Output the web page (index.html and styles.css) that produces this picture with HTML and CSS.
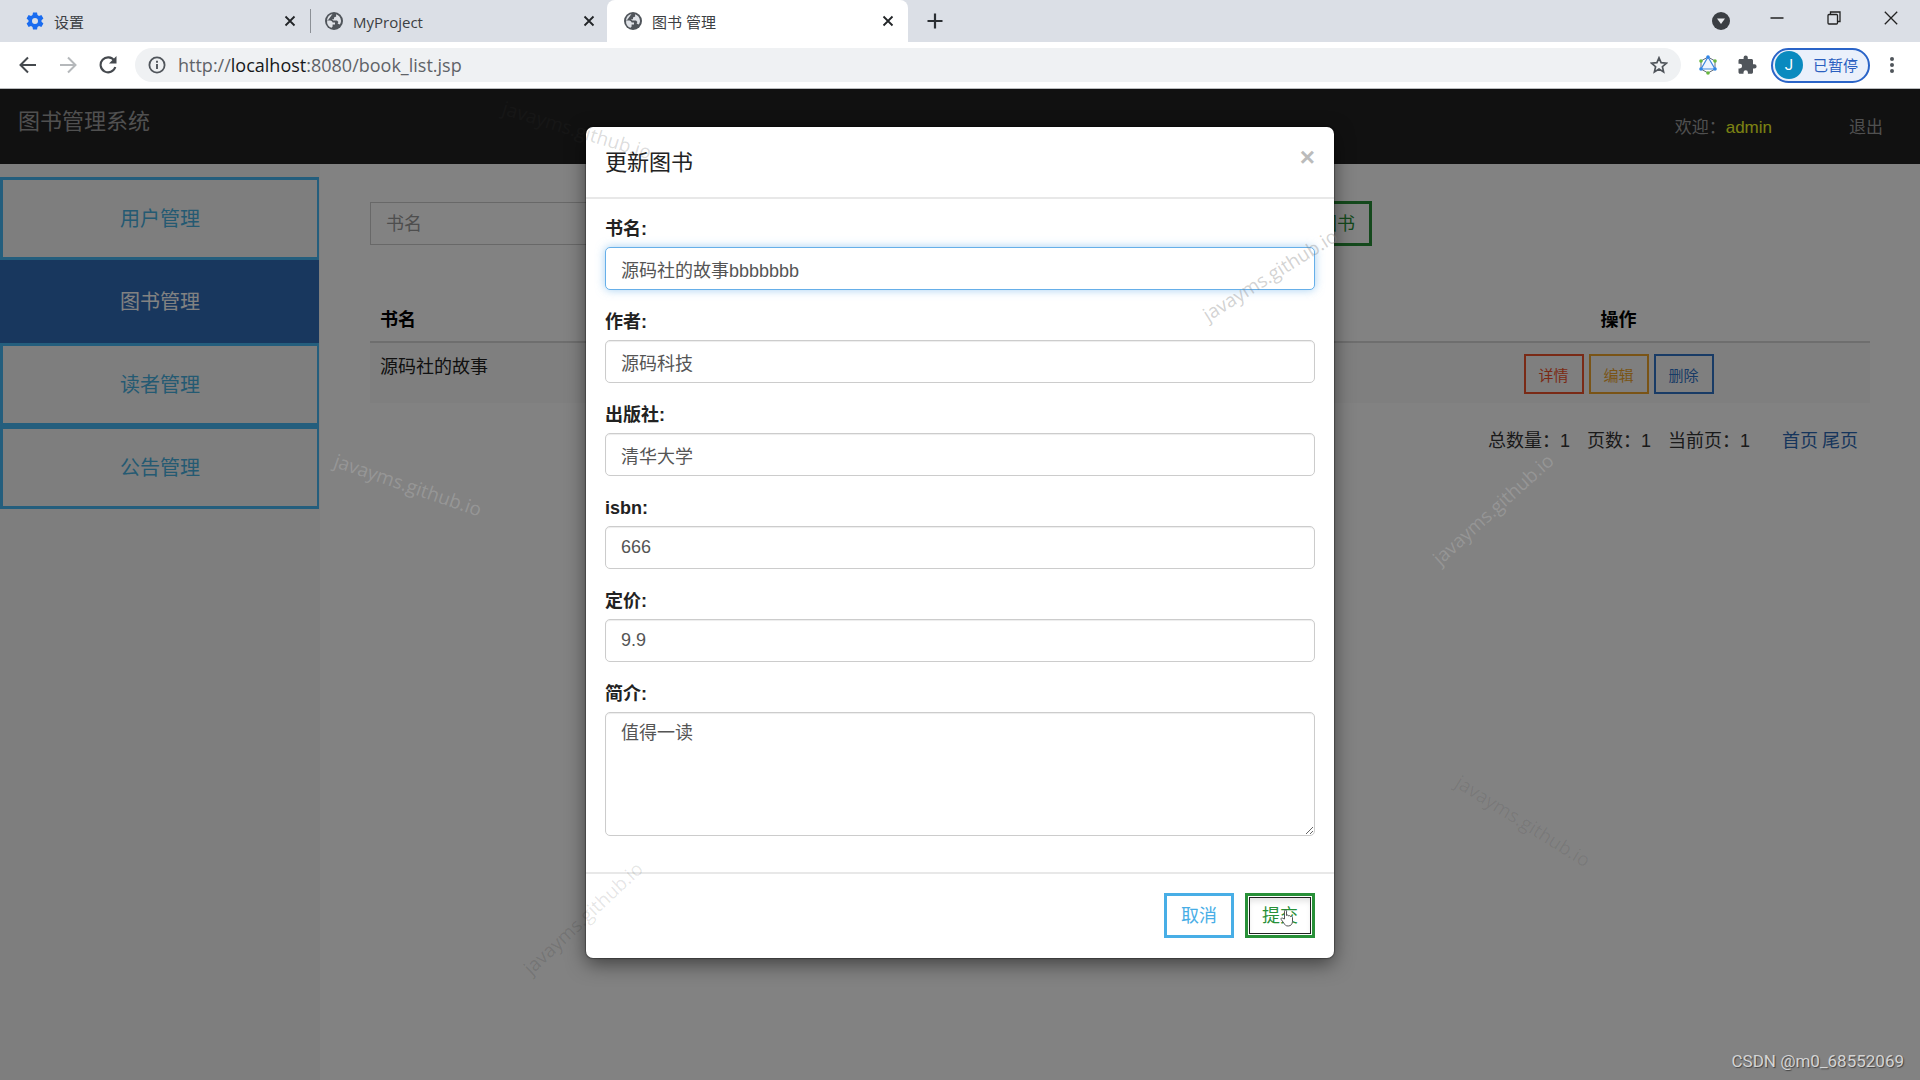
FILE: index.html
```
<!DOCTYPE html>
<html lang="zh-CN">
<head>
<meta charset="utf-8">
<title>图书 管理</title>
<link rel="stylesheet" href="styles.css">
</head>
<body>
<svg class="defs" aria-hidden="true">
  <symbol id="globe" viewBox="0 0 18 18">
    <circle cx="9" cy="9" r="9" fill="#50555b"/>
    <path d="M7.500 2C4.500 2.600 2.300 5 2 8.200L5.200 8.400C6.600 8.600 7.400 9.400 7.600 10.400H10V12.600H7.600V14.600L6.600 15.800C3.800 15 2 12.600 2 9.500" fill="#dfe2e7"/>
    <path d="M11 2.300L11.200 4.400L9 5.400V7.200H7L8.200 8.600H12L13.400 10L12.600 11.600L14.600 12.400C15.600 11.400 16 10 16 8.700C15.800 5.600 13.800 3.100 11 2.300Z" fill="#dfe2e7"/>
  </symbol>
  <symbol id="cross" viewBox="0 0 12 12">
    <path d="M1.500 1.500L10.500 10.500M10.500 1.500L1.500 10.500" stroke="#222528" stroke-width="1.800" fill="none"/>
  </symbol>
</svg>

<header class="browser">
  <div class="tabs">
    <div class="tab tab-first">
      <svg class="favicon" viewBox="0 0 18 18"><path fill="#1a6cf0" fill-rule="evenodd" d="M7 .5h4l.5 2.500 1.500.9 2.400-.8 2 3.400-1.900 1.700v1.600l1.900 1.700-2 3.400-2.400-.8-1.500.9-.5 2.500H7l-.5-2.500-1.500-.9-2.400.8-2-3.400 1.900-1.700V8.200L.6 6.500l2-3.400 2.400.8 1.500-.9zM9 6a3 3 0 1 0 0 6 3 3 0 0 0 0-6z"/></svg>
      <span class="tab-title">设置</span>
      <button class="icon-btn" aria-label="关闭标签页"><svg class="cross"><use href="#cross"/></svg></button>
    </div>
    <div class="tab tab-second">
      <svg class="favicon"><use href="#globe"/></svg>
      <span class="tab-title">MyProject</span>
      <button class="icon-btn" aria-label="关闭标签页"><svg class="cross"><use href="#cross"/></svg></button>
    </div>
    <div class="tab tab-active">
      <svg class="favicon"><use href="#globe"/></svg>
      <span class="tab-title">图书 管理</span>
      <button class="icon-btn" aria-label="关闭标签页"><svg class="cross"><use href="#cross"/></svg></button>
    </div>
    <button class="icon-btn new-tab" aria-label="新标签页"><svg width="16" height="16" viewBox="0 0 16 16"><path d="M8 .5v15M.5 8h15" stroke="#2b2f33" stroke-width="2.200"/></svg></button>
    <div class="window-controls">
      <button class="icon-btn tab-search" aria-label="搜索标签页"><svg width="18" height="18" viewBox="0 0 18 18"><circle cx="9" cy="9" r="9" fill="#3a3e43"/><path d="M5 6.500h8L9 12z" fill="#e8eaed"/></svg></button>
      <button class="icon-btn control" aria-label="最小化"><svg width="14" height="14" viewBox="0 0 14 14"><path d="M.5 7h13" stroke="#222" stroke-width="1.500"/></svg></button>
      <button class="icon-btn control" aria-label="还原"><svg width="14" height="14" viewBox="0 0 14 14" fill="none" stroke="#222" stroke-width="1.300"><rect x="1" y="3.500" width="9.500" height="9.500" rx="1"/><path d="M3.500 3.500V1h9.500v9.500h-2.500"/></svg></button>
      <button class="icon-btn control" aria-label="关闭"><svg width="14" height="14" viewBox="0 0 14 14"><path d="M.8.800L13.200 13.200M13.200.800L.8 13.200" stroke="#222" stroke-width="1.300"/></svg></button>
    </div>
  </div>
  <div class="toolbar">
    <button class="icon-btn" aria-label="后退"><svg width="18" height="18" viewBox="0 0 18 18"><path d="M17 9H2M9 1.500L1.500 9 9 16.500" fill="none" stroke="#45494e" stroke-width="2"/></svg></button>
    <button class="icon-btn" aria-label="前进"><svg width="18" height="18" viewBox="0 0 18 18"><path d="M1 9h15M9 1.500L16.500 9 9 16.500" fill="none" stroke="#b5b8bb" stroke-width="2"/></svg></button>
    <button class="icon-btn" aria-label="重新加载"><svg width="18" height="18" viewBox="0 0 18 18"><path d="M15.300 4.600A7.500 7.500 0 1 0 16.300 11" fill="none" stroke="#45494e" stroke-width="2.100"/><path d="M17.500 0v7.500H10z" fill="#45494e"/></svg></button>
    <div class="address">
      <svg width="18" height="18" viewBox="0 0 18 18"><circle cx="9" cy="9" r="7.600" fill="none" stroke="#50555b" stroke-width="1.800"/><path d="M9 8v5M9 4.700v2" stroke="#50555b" stroke-width="1.900"/></svg>
      <span class="url">http://<b>localhost</b>:8080/book_list.jsp</span>
      <svg width="18" height="18" viewBox="0 0 18 18"><path d="M9 1.800l2.100 4.900 5.300.5-4 3.500 1.200 5.200L9 13.100l-4.600 2.800 1.200-5.200-4-3.500 5.300-.5z" fill="none" stroke="#50555b" stroke-width="1.700"/></svg>
    </div>
    <div class="actions">
      <svg width="18" height="20" viewBox="0 0 18 20"><path d="M9 2l7 4v8l-7 4-7-4V6z" fill="none" stroke="#5d6a78"/><path d="M9 2l7 12H2z" fill="#eef4ff" stroke="#3d86e0" stroke-width="1.200"/><circle cx="9" cy="2" r="1.800" fill="#2f86e8"/><circle cx="16" cy="14" r="1.800" fill="#2f86e8"/><circle cx="2" cy="14" r="1.800" fill="#2f86e8"/><circle cx="2" cy="6" r="1.800" fill="#68b83e"/><circle cx="16" cy="6" r="1.800" fill="#68b83e"/><circle cx="9" cy="18" r="1.800" fill="#68b83e"/></svg>
      <svg width="20" height="20" viewBox="0 0 20 20"><path fill="#50555b" d="M17.500 9.300H16V5.500c0-.8-.7-1.500-1.500-1.500h-3.700V2.600a2.100 2.100 0 0 0-4.200 0V4H3C2.200 4 1.500 4.700 1.500 5.500v3.300h1.300a2.300 2.300 0 0 1 0 4.600H1.500v3.800c0 .8.700 1.500 1.500 1.500h3.500v-1.300a2.200 2.200 0 0 1 4.400 0v1.300h3.600c.8 0 1.500-.7 1.500-1.500v-3.700h1.500a2.100 2.100 0 0 0 0-4.200z"/></svg>
      <button class="profile"><span class="avatar">J</span>已暂停</button>
      <button class="icon-btn" aria-label="菜单"><svg width="4" height="18" viewBox="0 0 4 18" fill="#50555b"><circle cx="2" cy="3" r="2"/><circle cx="2" cy="9" r="2"/><circle cx="2" cy="15" r="2"/></svg></button>
    </div>
  </div>
</header>

<div class="page">
  <nav class="navbar">
    <a class="brand" href="#">图书管理系统</a>
    <span class="welcome">欢迎：<a class="user" href="#">admin</a></span>
    <a class="logout" href="#">退出</a>
  </nav>
  <div class="layout">
    <aside class="sidebar">
      <button class="side-btn">用户管理</button>
      <button class="side-btn side-active">图书管理</button>
      <button class="side-btn">读者管理</button>
      <button class="side-btn">公告管理</button>
    </aside>
    <main class="content">
      <form class="search">
        <input class="search-input" type="text" placeholder="书名" aria-label="书名">
        <button class="btn success" type="button">添加图书</button>
      </form>
      <table class="books">
        <thead><tr><th>书名</th><th></th><th class="ops">操作</th></tr></thead>
        <tbody><tr>
          <td>源码社的故事</td><td></td>
          <td class="ops">
            <div class="row-actions">
              <button class="btn small danger">详情</button>
              <button class="btn small warning">编辑</button>
              <button class="btn small primary">删除</button>
            </div>
          </td>
        </tr></tbody>
      </table>
      <div class="pager">
        <span>总数量：1</span><span>页数：1</span><span>当前页：1</span>
        <div class="pager-links"><a href="#">首页</a><a href="#">尾页</a></div>
      </div>
    </main>
  </div>

  <div class="backdrop">
    <div class="modal" role="dialog" aria-labelledby="modal-title">
      <div class="modal-header">
        <h4 class="modal-title" id="modal-title">更新图书</h4>
        <button class="modal-close" aria-label="关闭">×</button>
      </div>
      <form class="modal-body">
        <div class="field"><label for="name">书名:</label><input class="control-box focused" id="name" type="text" value="源码社的故事bbbbbbb"></div>
        <div class="field"><label for="author">作者:</label><input class="control-box" id="author" type="text" value="源码科技"></div>
        <div class="field"><label for="press">出版社:</label><input class="control-box" id="press" type="text" value="清华大学"></div>
        <div class="field"><label for="isbn">isbn:</label><input class="control-box" id="isbn" type="text" value="666"></div>
        <div class="field"><label for="price">定价:</label><input class="control-box" id="price" type="text" value="9.9"></div>
        <div class="field"><label for="intro">简介:</label><textarea class="control-box intro" id="intro">值得一读</textarea></div>
      </form>
      <div class="modal-footer">
        <button class="btn info">取消</button>
        <button class="btn success pressed">提交
          <svg class="pointer" width="16" height="18" viewBox="0 0 16 18"><path d="M4.500 10V2.200c0-1.600 2-1.600 2 0v4.300c.4-.8 2-.6 2 .5.500-.7 2-.5 2 .6.600-.6 2-.3 2 .9v3.700c0 2.800-1.600 4.800-4.300 4.800-2.500 0-3.200-1-4.300-2.800L1.200 10.500c-.7-1.300.8-2.100 1.700-1.100z" fill="#fff" stroke="#555" stroke-width="1"/></svg>
        </button>
      </div>
    </div>
  </div>

  <div class="marks" aria-hidden="true">
    <span class="mark mark-a">javayms.github.io</span>
    <span class="mark mark-b">javayms.github.io</span>
    <span class="mark mark-c">javayms.github.io</span>
    <span class="mark mark-d">javayms.github.io</span>
    <span class="mark mark-e">javayms.github.io</span>
    <span class="mark mark-f">javayms.github.io</span>
    <span class="credit">CSDN @m0_68552069</span>
  </div>
</div>
</body>
</html>
```
FILE: styles.css
```
* { box-sizing: border-box; }

body {
  margin: 0;
  min-height: 100vh;
  display: flex;
  flex-direction: column;
  font: 18px/25px "Liberation Sans", "Noto Sans CJK SC", sans-serif;
  color: #333;
  background: #fff;
}

button, input, textarea { font: inherit; color: inherit; margin: 0; }
a { text-decoration: none; }
svg { display: block; flex: none; }
.defs { display: none; }
.icon-btn { border: 0; padding: 0; background: none; }

/* browser chrome */
.browser { font-family: "Open Sans", "Noto Sans CJK SC", sans-serif; }
.tabs { display: flex; align-items: center; height: 42px; background: #dbdfe6; font-size: 15px; color: #3c4043; }
.tab { display: flex; align-items: center; gap: 10px; height: 42px; }
.tab-first {
  width: 311px;
  padding: 0 15px 0 26px;
  background: linear-gradient(#8c9096, #8c9096) right center / 1px 24px no-repeat;
}
.tab-second { width: 296px; padding: 0 12px 0 14px; }
.tab-active { width: 301px; padding: 0 14px 0 17px; background: #fff; border-radius: 8px 8px 0 0; }
.tab-title { flex: 1; padding-top: 2px; }
.favicon { width: 18px; height: 18px; }
.cross { width: 12px; height: 12px; }
.new-tab { margin-left: 19px; }
.window-controls { display: flex; align-items: center; margin-left: auto; gap: 43px; padding-right: 22px; }
.tab-search { margin-right: -3px; }
.control { padding-bottom: 6px; }
.toolbar {
  display: flex;
  align-items: center;
  gap: 22px;
  height: 47px;
  padding: 0 26px 0 19px;
  border-bottom: 1px solid #b9bbbd;
}
.address {
  flex: 1;
  display: flex;
  align-items: center;
  gap: 12px;
  height: 34px;
  padding: 0 13px;
  margin-left: -4px;
  border-radius: 17px;
  background: #eff1f3;
  font-size: 18px;
  color: #5f6368;
}
.url { flex: 1; }
.url b { font-weight: 400; color: #16181a; }
.actions { display: flex; align-items: center; gap: 20px; margin-left: -4px; }
.profile {
  display: flex;
  align-items: center;
  gap: 10px;
  height: 35px;
  padding: 0 10px 0 2px;
  margin-left: -6px;
  border: 2px solid #2a64c8;
  border-radius: 18px;
  background: #eaf0fb;
  font-size: 15px;
  color: #2a5fc0;
}
.avatar { width: 28px; height: 28px; border-radius: 14px; background: #0a8abf; color: #fff; font-family: Roboto, sans-serif; line-height: 28px; }

/* application */
.page { flex: 1; position: relative; display: flex; flex-direction: column; overflow: hidden; }
.navbar { display: flex; align-items: center; height: 75px; padding: 2px 37px 0 18px; background: #222; color: #9d9d9d; font-size: 17px; }
.navbar a { color: #9d9d9d; }
.navbar .brand { font-size: 22px; margin: 0 auto 12px 0; }
.navbar .user { color: #f2ff26; }
.logout { margin-left: 77px; }

.layout { flex: 1; display: flex; }
.sidebar { width: 320px; padding: 13px 1px 0 0; background: #f8f8f8; display: flex; flex-direction: column; }
.side-btn { height: 83px; padding: 2px 0 0; border: 3px solid #48b8f5; border-right-width: 2px; background: none; font-size: 20px; color: #48b0e0; }
.side-active { background: #2f6cb8; border-color: #2f6cb8; color: #fff; }

.content { flex: 1; padding: 37px 50px 0; color: #222; }
.search { display: flex; align-items: center; gap: 20px; max-width: 1002px; height: 45px; }
.search-input { flex: 1; height: 43px; padding: 2px 15px 0; border: 1px solid #ccc; background: none; }
.search-input::placeholder { color: #999; opacity: 1; }

.btn { height: 45px; padding: 2px 14px 0; border: 3px solid; background: none; }
.success { color: #289038; }
.info { color: #48aee6; }
.danger { color: #f0532c; }
.warning { color: #f0a52c; }
.primary { color: #2f74c8; }
.small { height: 40px; width: 60px; padding: 2px 0 0; border-width: 2px; font-size: 15px; }

.books { width: 100%; margin-top: 50px; border-collapse: collapse; table-layout: fixed; }
.books th, .books td { padding: 12px 10px 9px; text-align: left; vertical-align: top; }
.books th { padding-bottom: 8px; border-bottom: 2px solid #d8d8d8; color: #000; }
.books tbody tr { background: #f9f9f9; }
.books .ops { text-align: center; padding-right: 13px; }
.books td.ops { padding-top: 11px; }
.row-actions { display: flex; justify-content: center; gap: 5px; }

.pager { display: flex; justify-content: flex-end; gap: 17px; padding: 26px 12px 0 0; color: #333; }
.pager-links { display: flex; gap: 4px; margin-left: 15px; }
.pager-links a { color: #2c69b4; }

/* dialog */
.backdrop { position: absolute; inset: 0; display: flex; justify-content: center; align-items: flex-start; padding-top: 38px; background: rgba(0, 0, 0, .49); }
.modal { width: 748px; border-radius: 7px; background: #fff; box-shadow: 0 0 1px 1px rgba(0, 0, 0, .3), 0 6px 19px rgba(0, 0, 0, .5); }
.modal-header { display: flex; justify-content: space-between; height: 72px; padding: 19px; border-bottom: 2px solid #e8e8e8; }
.modal-title { margin: 0; font-weight: 400; font-size: 22px; line-height: 34px; color: #222; }
.modal-close { height: 22px; padding: 0; border: 0; background: none; font-size: 26px; line-height: 22px; font-weight: 700; color: #bbb; }
.modal-body { display: flex; flex-direction: column; gap: 19px; padding: 17px 19px 36px; }
.field { display: flex; flex-direction: column; gap: 4px; }
.field label { font-weight: 700; line-height: 27px; color: #222; }
.control-box {
  width: 100%;
  height: 43px;
  padding: 8px 15px;
  border: 1px solid #ccc;
  border-radius: 5px;
  background: #fff;
  color: #555;
  box-shadow: inset 0 1px 1px rgba(0, 0, 0, .075);
}
.focused { border-color: #66afe9; box-shadow: 0 0 10px rgba(102, 175, 233, .6); }
.intro { display: block; height: 124px; resize: vertical; }
.modal-footer { display: flex; justify-content: flex-end; gap: 11px; padding: 19px 19px 20px; border-top: 2px solid #e8e8e8; }
.pressed {
  position: relative;
  box-shadow: inset 0 0 0 1px #fff, inset 0 0 0 2px #222, inset 0 5px 6px rgba(0, 0, 0, .12);
}
.pointer { position: absolute; left: 32px; top: 13px; }

/* watermarks lie over the whole page */
.marks { position: absolute; inset: 0; pointer-events: none; }
.mark {
  position: absolute;
  width: 160px;
  height: 28px;
  margin: -14px 0 0 -80px;
  text-align: center;
  font: 19px/28px "Open Sans", sans-serif;
}
.mark-a { left: 577px; top: 41px; transform: rotate(17deg); color: rgba(50, 50, 50, .18); }
.mark-b { left: 1270px; top: 186px; transform: rotate(-32deg); color: rgba(130, 130, 130, .36); }
.mark-c { left: 408px; top: 396px; transform: rotate(19deg); color: rgba(255, 255, 255, .18); }
.mark-d { left: 1493px; top: 420px; transform: rotate(-42deg); color: rgba(255, 255, 255, .17); }
.mark-e { left: 1523px; top: 732px; transform: rotate(32deg); color: rgba(0, 0, 0, .07); }
.mark-f { left: 583px; top: 829px; transform: rotate(-43deg); color: rgba(0, 0, 0, .11); }
.credit { position: absolute; right: 16px; bottom: 6px; font: 17px/25px Roboto, sans-serif; color: #d4d4d4; text-shadow: 1px 1px 1px #444; }
```
